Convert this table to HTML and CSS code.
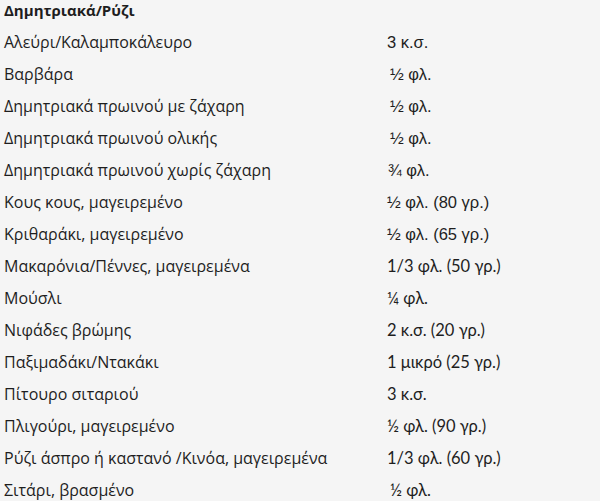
FILE: index.html
```html
<!DOCTYPE html>
<html lang="el">
<head>
<meta charset="utf-8">
<link rel="stylesheet" href="styles.css">
</head>
<body>
<div class="list">
  <div class="row head"><span class="name">Δημητριακά/Ρύζι</span><span class="qty"></span></div>
  <div class="row"><span class="name">Αλεύρι/Καλαμποκάλευρο</span><span class="qty arial">3 κ.σ.</span></div>
  <div class="row"><span class="name">Βαρβάρα</span><span class="qty arial s2">½ φλ.</span></div>
  <div class="row"><span class="name">Δημητριακά πρωινού με ζάχαρη</span><span class="qty arial s2">½ φλ.</span></div>
  <div class="row"><span class="name">Δημητριακά πρωινού ολικής</span><span class="qty arial s2">½ φλ.</span></div>
  <div class="row"><span class="name">Δημητριακά πρωινού χωρίς ζάχαρη</span><span class="qty arial s1">¾ φλ.</span></div>
  <div class="row"><span class="name">Κους κους, μαγειρεμένο</span><span class="qty arial">½ φλ. (80 γρ.)</span></div>
  <div class="row"><span class="name">Κριθαράκι, μαγειρεμένο</span><span class="qty arial">½ φλ. (65 γρ.)</span></div>
  <div class="row"><span class="name">Μακαρόνια/Πέννες, μαγειρεμένα</span><span class="qty geo">1/3 φλ. (50 γρ.)</span></div>
  <div class="row"><span class="name">Μούσλι</span><span class="qty geo">¼ φλ.</span></div>
  <div class="row"><span class="name">Νιφάδες βρώμης</span><span class="qty geo">2 κ.σ. (20 γρ.)</span></div>
  <div class="row"><span class="name">Παξιμαδάκι/Ντακάκι</span><span class="qty geo">1 μικρό (25 γρ.)</span></div>
  <div class="row"><span class="name">Πίτουρο σιταριού</span><span class="qty geo">3 κ.σ.</span></div>
  <div class="row"><span class="name">Πλιγούρι, μαγειρεμένο</span><span class="qty geo">½ φλ. (90 γρ.)</span></div>
  <div class="row"><span class="name">Ρύζι άσπρο ή καστανό /Κινόα, μαγειρεμένα</span><span class="qty geo">1/3 φλ. (60 γρ.)</span></div>
  <div class="row"><span class="name">Σιτάρι, βρασμένο</span><span class="qty geo s2">½ φλ.</span></div>
</div>
</body>
</html>
```
FILE: styles.css
```css
html, body {
  margin: 0;
  padding: 0;
  background: #f5f5f5;
}
body {
  color: #1e1e1e;
  font-family: "Open Sans", sans-serif;
  font-size: 16px;
}
.list {
  display: flex;
  flex-direction: column;
  padding: 0 0 0 4px;
}
.row {
  display: grid;
  grid-template-columns: 383px 1fr;
  height: 32px;
  align-items: center;
}
.head {
  height: 22px;
  margin-top: -1px;
  margin-bottom: 5px;
  font-size: 15px;
}
.head .name {
  font-weight: 700;
}
.qty {
  font-size: 16.5px;
}
.qty.arial {
  font-family: "Liberation Sans", Arial, sans-serif;
}
.qty.geo {
  font-family: "Lato", sans-serif;
}
.s1 { padding-left: 1px; }
.s2 { padding-left: 3px; }
```
